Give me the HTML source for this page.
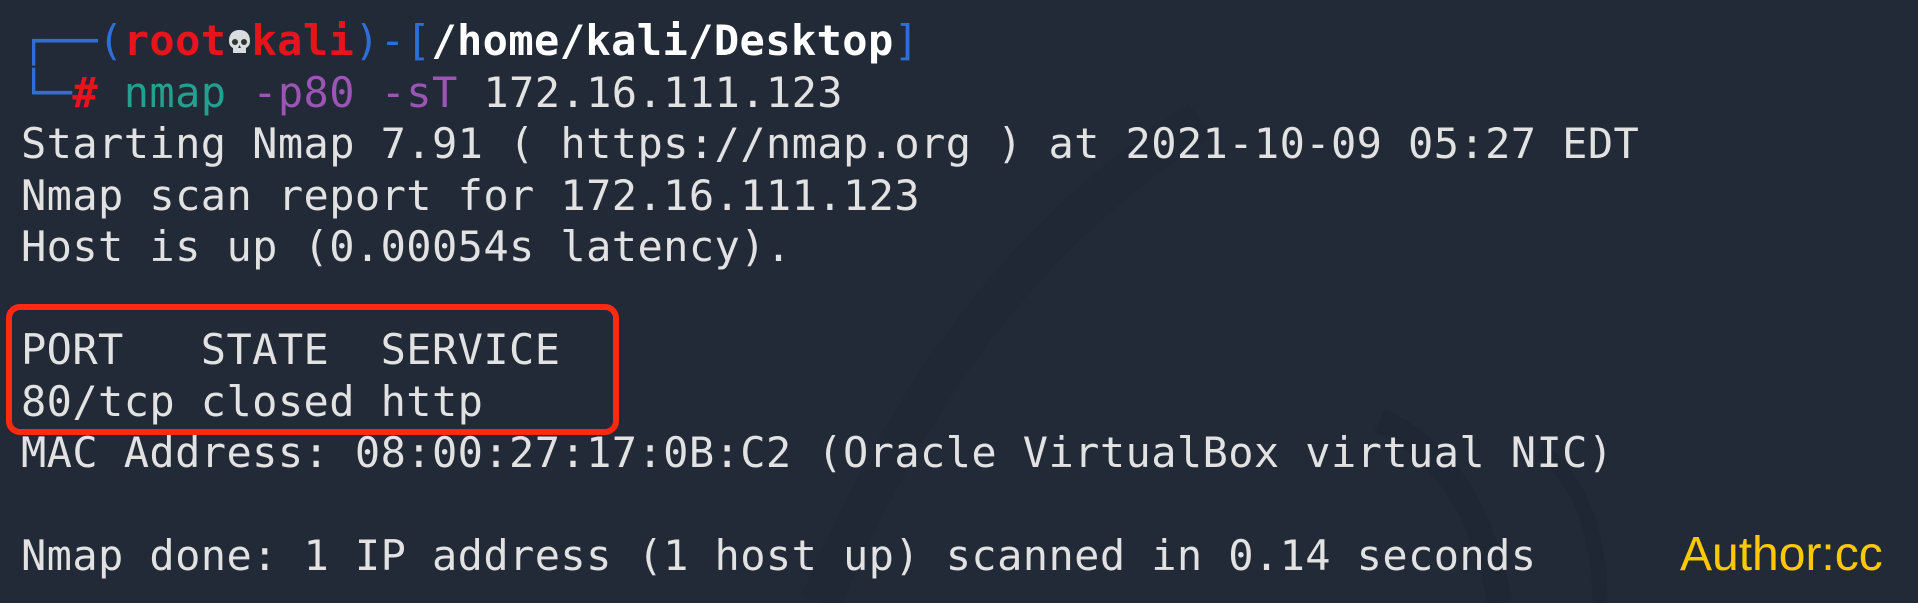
<!DOCTYPE html>
<html><head><meta charset="utf-8"><style>
html,body{margin:0;padding:0}
body{width:1918px;height:603px;background:#222a37;overflow:hidden;position:relative}
pre{position:absolute;left:21px;top:15px;margin:0;font-family:"DejaVu Sans Mono","Liberation Mono",monospace;font-size:42px;line-height:51.5px;color:#e2e2e2;letter-spacing:0.4px}
.b{color:#2d6fd6}.r{color:#e8141c;font-weight:bold}.w{color:#fff;font-weight:bold}.t{color:#23a08f}.p{color:#9b55b5}
.sk{display:inline-block;width:25px;height:30px;vertical-align:-3px;position:relative}
.box{position:absolute;left:6px;top:304px;width:601px;height:119px;border:6px solid #ff2a10;border-radius:14px}
.au{position:absolute;left:1680px;top:527px;font-family:"Liberation Sans",Arial,sans-serif;font-size:48px;color:#ffc800}
</style></head><body>
<svg width="1918" height="603" style="position:absolute;left:0;top:0">
<path d="M820 603 C 900 420, 1000 250, 1200 120" stroke="#1f2633" stroke-width="40" fill="none" opacity="0.5"/>
<path d="M1500 603 C 1480 500, 1440 450, 1380 420" stroke="#1e2431" stroke-width="25" fill="none" opacity="0.5"/>
<path d="M1600 603 C 1600 520, 1570 470, 1540 450" stroke="#1e2431" stroke-width="15" fill="none" opacity="0.5"/>
</svg>
<pre><span class="b">┌──(</span><span class="r">root</span><span class="sk"><svg width="25" height="30" viewBox="0 0 25 30"><path d="M12.5 2C5 2 2 7 2 13c0 4 2 6 4 7v5h13v-5c2-1 4-3 4-7 0-6-3-11-10.5-11z" fill="#d8dde0"/><circle cx="8" cy="14" r="3" fill="#333"/><circle cx="17" cy="14" r="3" fill="#333"/><path d="M12.5 17l-1.5 3h3z" fill="#333"/></svg></span><span class="r">kali</span><span class="b">)-[</span><span class="w">/home/kali/Desktop</span><span class="b">]</span>
<span class="b">└─</span><span class="r">#</span> <span class="t">nmap</span> <span class="p">-p80</span> <span class="p">-sT</span> 172.16.111.123
Starting Nmap 7.91 ( https://nmap.org ) at 2021-10-09 05:27 EDT
Nmap scan report for 172.16.111.123
Host is up (0.00054s latency).

PORT   STATE  SERVICE
80/tcp closed http
MAC Address: 08:00:27:17:0B:C2 (Oracle VirtualBox virtual NIC)

Nmap done: 1 IP address (1 host up) scanned in 0.14 seconds</pre>
<div class="box"></div>
<div class="au">Author:cc</div>
</body></html>
